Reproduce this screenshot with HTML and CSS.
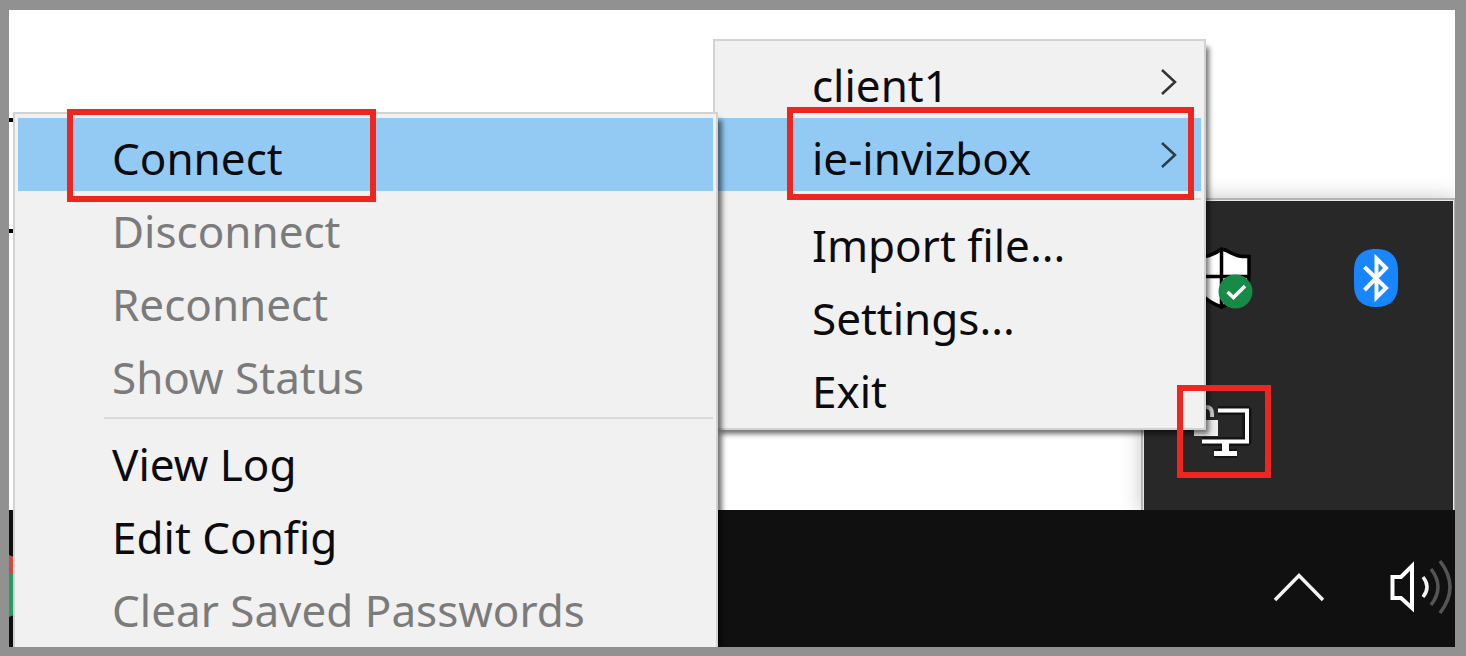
FILE: index.html
```html
<!DOCTYPE html>
<html lang="en">
<head>
<meta charset="utf-8">
<title>Tray menu</title>
<link rel="stylesheet" href="styles.css">
</head>
<body>
<main class="screen">
  <section class="wallpaper">
    <div class="window-edge"></div>
    <div class="tray">
      <button class="tray-item" aria-label="Security">
        <svg width="64" height="64" viewBox="0 0 64 64">
          <path d="M32.500 3C27 7 21 10.500 14 10.500H5V30C5 45 17 55 32.500 61C48 55 60 45 60 30V10.500H54C45 10.500 39 4 32.500 3Z" fill="#fff" stroke="#000" stroke-width="3.500"/>
          <path d="M32.500 3V61M5 30.500H60" stroke="#000" stroke-width="3.500"/>
          <circle cx="46.500" cy="45.500" r="17" fill="#178a46"/>
          <path d="M38.500 46L44.500 51.500L56 40" fill="none" stroke="#fff" stroke-width="3.500"/>
        </svg>
      </button>
      <button class="tray-item" aria-label="Bluetooth">
        <svg width="44" height="58" viewBox="0 0 44 58">
          <path d="M22 0C37 0 44 8 44 22V36C44 50 37 58 22 58S0 50 0 36V22C0 8 7 0 22 0Z" fill="#1786ff"/>
          <path d="M10.500 18L32 39L22.500 48.500V9.500L32 19L10.500 41" fill="none" stroke="#fff" stroke-width="4"/>
        </svg>
      </button>
      <button class="tray-item" aria-label="VPN">
        <svg width="64" height="64" viewBox="0 0 64 64">
          <g fill="none" stroke="#141414" stroke-width="9" stroke-linejoin="round">
            <path d="M29 10.500H58V41.500H13M36.500 42V53M25 53.500H48"/>
          </g>
          <path d="M29 10.500H58V41.500H13" fill="none" stroke="#fff" stroke-width="4"/>
          <path d="M33 42H40V51H48V56H25V51H33Z" fill="#fff"/>
          <path d="M5 20H29V36H5Z" fill="#eee"/>
          <path d="M11 20V14Q11 7 17 7Q23 7 23 14V17" fill="none" stroke="#ccc" stroke-width="4"/>
        </svg>
      </button>
    </div>
  </section>
  <footer class="taskbar">
    <svg class="app-icon" width="5" height="62" viewBox="0 0 5 62">
      <path d="M0 0L5 2V18H0Z" fill="#c94b44"/>
      <path d="M0 18H5V60L0 62Z" fill="#279b62"/>
    </svg>
    <div class="system-icons">
      <button class="bar-button" aria-label="Show hidden icons">
        <svg width="52" height="52" viewBox="0 0 52 52"><path d="M2 39L26 14.500L50 39" fill="none" stroke="#f2f2f2" stroke-width="3.500"/></svg>
      </button>
      <button class="bar-button" aria-label="Volume">
        <svg width="66" height="52" viewBox="0 0 66 52" fill="none">
          <path d="M3.500 16H12L23 5V47L12 37H3.500Z" stroke="#fff" stroke-width="4"/>
          <path d="M34 16Q42 26 34 36" stroke="#f2f2f2" stroke-width="3.500"/>
          <path d="M42 8Q56 26 42 44" stroke="#555" stroke-width="3.500"/>
          <path d="M51 0Q71 26 51 52" stroke="#555" stroke-width="3.500"/>
        </svg>
      </button>
    </div>
  </footer>
  <nav class="menus">
    <ul class="menu submenu">
      <li class="row active"><button class="item">Connect</button><span class="marker marker-connect"></span></li>
      <li class="row"><button class="item" disabled>Disconnect</button></li>
      <li class="row"><button class="item" disabled>Reconnect</button></li>
      <li class="row"><button class="item" disabled>Show Status</button></li>
      <li class="separator"></li>
      <li class="row"><button class="item">View Log</button></li>
      <li class="row"><button class="item">Edit Config</button></li>
      <li class="row"><button class="item" disabled>Clear Saved Passwords</button></li>
    </ul>
    <ul class="menu root-menu">
      <li class="row"><button class="item">client1
        <svg width="16" height="26" viewBox="0 0 16 26"><path d="M1 1L14 13L1 25" fill="none" stroke="#333" stroke-width="2.500"/></svg></button></li>
      <li class="row active"><button class="item">ie-invizbox
        <svg width="16" height="26" viewBox="0 0 16 26"><path d="M1 1L14 13L1 25" fill="none" stroke="#2a3c4c" stroke-width="2.500"/></svg></button><span class="marker marker-profile"></span></li>
      <li class="separator"></li>
      <li class="row"><button class="item">Import file...</button></li>
      <li class="row"><button class="item">Settings...</button></li>
      <li class="row"><button class="item">Exit</button></li>
    </ul>
  </nav>
  <span class="marker marker-tray"></span>
</main>
</body>
</html>
```
FILE: styles.css
```css
* {
  box-sizing: border-box;
}

body {
  margin: 0;
  background: #919191;
  font-family: "Noto Sans", "Open Sans", sans-serif;
  font-size: 44px;
  line-height: 60px;
  color: #0b0b0e;
}

button {
  font: inherit;
  color: inherit;
  background: none;
  border: 0;
  padding: 0;
}

.screen {
  position: relative;
  display: flex;
  flex-direction: column;
  height: calc(100vh - 19px);
  margin: 10px 11px 9px 9px;
  overflow: hidden;
}

.wallpaper {
  position: relative;
  flex: 1;
  padding-top: 108px;
  background: #fff;
}

.window-edge {
  width: 40px;
  height: 115px;
  border: solid #000;
  border-width: 4px 0;
}

.tray {
  position: absolute;
  right: 2px;
  bottom: 0;
  display: grid;
  grid-template-columns: 1fr 1fr;
  grid-auto-rows: 154px;
  width: 309px;
  padding-bottom: 1px;
  background: #282828;
  box-shadow: 0 0 0 1px #e8e8e8, 0 0 0 3px #b4b4b4, 0 0 20px 2px rgba(0, 0, 0, 0.25);
}

.tray-item {
  display: flex;
  align-items: center;
  justify-content: center;
}

.taskbar {
  position: relative;
  display: flex;
  justify-content: space-between;
  height: 137px;
  padding-top: 45px;
  background: #101010;
}

.system-icons {
  display: flex;
  gap: 64px;
  padding-top: 6px;
}

.bar-button {
  display: flex;
  align-items: flex-start;
}

.bar-button svg {
  overflow: visible;
}

.menus {
  position: absolute;
  top: 29px;
  right: 249px;
  bottom: 0;
  display: flex;
}

.menu {
  margin: 0;
  padding: 4px 3px;
  list-style: none;
  background: #f1f1f1;
  border: 2px solid #d2d2d2;
}

.submenu {
  z-index: 1;
  width: 705px;
  margin: 73px -5px 0 0;
  border-bottom: 0;
  box-shadow: 6px 6px 5px -2px rgba(0, 0, 0, 0.55);
}

.root-menu {
  align-self: flex-start;
  width: 493px;
  box-shadow: 5px 6px 5px -2px rgba(0, 0, 0, 0.55);
}

.row {
  position: relative;
  height: 73px;
}

.active {
  background: #93caf4;
}

.item {
  display: flex;
  align-items: center;
  justify-content: space-between;
  width: 100%;
  height: 100%;
  padding: 6px 24px 0 94px;
  text-align: left;
}

.item svg {
  margin-bottom: 6px;
}

.item:disabled {
  color: #7b7b7b;
}

.separator {
  height: 14px;
  padding-top: 7px;
  margin-left: 86px;
}

.separator::before {
  content: "";
  display: block;
  height: 2px;
  background: #d9d9d9;
}

.marker {
  position: absolute;
  z-index: 2;
  border: 6px solid #ed2720;
  pointer-events: none;
}

.marker-connect {
  top: -9px;
  bottom: -11px;
  left: 49px;
  width: 309px;
}

.marker-profile {
  top: -11px;
  right: 7px;
  bottom: -9px;
  left: 69px;
}

.marker-tray {
  right: 184px;
  bottom: 169px;
  width: 94px;
  height: 93px;
}
```
